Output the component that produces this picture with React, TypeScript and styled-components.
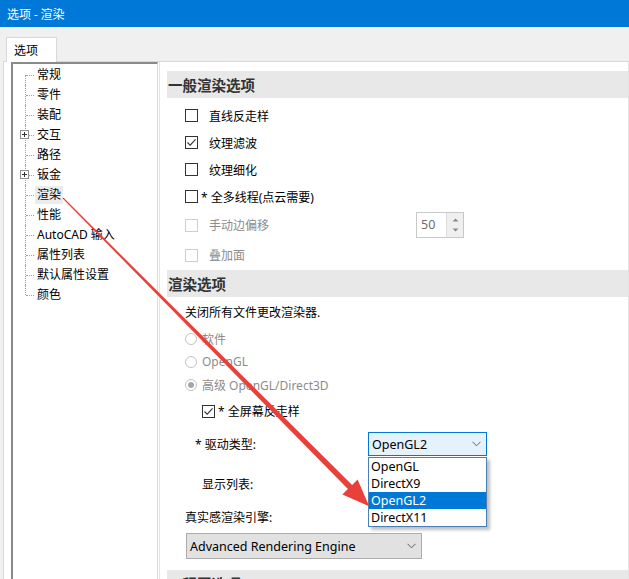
import React from "react";
import styled, { createGlobalStyle } from "styled-components";

const GlobalStyle = createGlobalStyle`
  html, body {
    margin: 0;
    padding: 0;
    background: #f0f0f0;
    overflow: hidden;
  }
  body {
    font-family: "Noto Sans", "Noto Sans CJK SC", sans-serif;
    font-size: 12px;
    color: #000;
  }
`;

const treeItems = [
  { label: "常规" },
  { label: "零件" },
  { label: "装配" },
  { label: "交互", expandable: true },
  { label: "路径" },
  { label: "钣金", expandable: true },
  { label: "渲染", selected: true },
  { label: "性能" },
  { label: "AutoCAD 输入" },
  { label: "属性列表" },
  { label: "默认属性设置" },
  { label: "颜色" },
];

const driverOptions = ["OpenGL", "DirectX9", "OpenGL2", "DirectX11"];

const Chevron = () => (
  <svg width="9" height="6" viewBox="0 0 9 6">
    <path d="M0.5 0.8 L4.5 4.8 L8.5 0.8" fill="none" stroke="#606060" strokeWidth="1" />
  </svg>
);

const Check = () => (
  <svg width="11" height="11" viewBox="0 0 11 11">
    <path d="M1.5 5.5 L4.2 8.2 L9.6 2.4" fill="none" stroke="#333" strokeWidth="1.1" />
  </svg>
);

const App = () => {
  return (
    <Window>
      <GlobalStyle />
      <TitleBar>选项 - 渲染</TitleBar>
      <TabStrip>
        <Tab>选项</Tab>
      </TabStrip>
      <TabPage>
        <Tree>
          {treeItems.map((item, i) => (
            <TreeRow key={item.label}>
              <Guide $first={i === 0} $last={i === treeItems.length - 1} />
              <Branch />
              {item.expandable && (
                <PlusBox>
                  <svg width="7" height="7" viewBox="0 0 7 7">
                    <path d="M1 3.5 H6 M3.5 1 V6" stroke="#333" strokeWidth="1" />
                  </svg>
                </PlusBox>
              )}
              <TreeLabel $selected={item.selected}>{item.label}</TreeLabel>
            </TreeRow>
          ))}
        </Tree>

        <Panel>
          <Header>一般渲染选项</Header>
          <Row $mt={4} $h={27} $indent={18}>
            <Box />
            <Label $gap={11}>直线反走样</Label>
          </Row>
          <Row $h={27} $indent={18}>
            <Box>
              <Check />
            </Box>
            <Label $gap={11}>纹理滤波</Label>
          </Row>
          <Row $h={27} $indent={18}>
            <Box />
            <Label $gap={11}>纹理细化</Label>
          </Row>
          <Row $h={27} $indent={18}>
            <Box />
            <Label $gap={3}>* 全多线程(点云需要)</Label>
          </Row>
          <Row $h={30} $indent={18}>
            <Box $disabled />
            <Label $gap={11} $dim $w={207}>
              手动边偏移
            </Label>
            <Spin>
              <SpinValue>50</SpinValue>
              <SpinButtons>
                <svg width="7" height="4" viewBox="0 0 7 4">
                  <path d="M0.5 3.5 L3.5 0.5 L6.5 3.5 Z" fill="#8a8a8a" />
                </svg>
                <svg width="7" height="4" viewBox="0 0 7 4">
                  <path d="M0.5 0.5 L3.5 3.5 L6.5 0.5 Z" fill="#8a8a8a" />
                </svg>
              </SpinButtons>
            </Spin>
          </Row>
          <Row $h={30} $indent={18}>
            <Box $disabled />
            <Label $gap={11} $dim>
              叠加面
            </Label>
          </Row>

          <Header>渲染选项</Header>
          <Row $mt={3} $h={24} $indent={18}>
            <Label>关闭所有文件更改渲染器.</Label>
          </Row>
          <Row $mt={3} $h={23} $indent={18}>
            <Radio />
            <Label $gap={5} $dim>
              软件
            </Label>
          </Row>
          <Row $h={23} $indent={18}>
            <Radio />
            <Label $gap={5} $dim>
              OpenGL
            </Label>
          </Row>
          <Row $h={23} $indent={18}>
            <Radio $checked />
            <Label $gap={5} $dim>
              高级 OpenGL/Direct3D
            </Label>
          </Row>
          <Row $mt={2} $h={26} $indent={35}>
            <Box>
              <Check />
            </Box>
            <Label $gap={3}>* 全屏幕反走样</Label>
          </Row>
          <Row $mt={8} $h={24} $indent={28}>
            <Label $w={173}>* 驱动类型:</Label>
            <ComboWrap>
              <Combo $active $w={119} $h={24}>
                <span>OpenGL2</span>
                <Chevron />
              </Combo>
              <DropList>
                {driverOptions.map((opt) => (
                  <DropItem key={opt} $hi={opt === "OpenGL2"}>
                    {opt}
                  </DropItem>
                ))}
              </DropList>
            </ComboWrap>
          </Row>
          <Row $mt={16} $h={24} $indent={35}>
            <Label>显示列表:</Label>
          </Row>
          <Row $mt={11} $h={20} $indent={18}>
            <Label>真实感渲染引擎:</Label>
          </Row>
          <Row $mt={6} $h={26} $indent={19}>
            <Combo $w={236} $h={26}>
              <span>Advanced Rendering Engine</span>
              <Chevron />
            </Combo>
          </Row>
          <Header $mt={11}>工程图选项</Header>
        </Panel>
      </TabPage>

      <ArrowLayer viewBox="0 0 629 579" width="629" height="579">
        <polygon
          points="63.4,197.6 352.1,484.9 357.6,479.4 369.2,506.2 342.4,494.6 347.9,489.1 62.6,198.4"
          fill="#e8403a"
        />
      </ArrowLayer>
    </Window>
  );
};

const Window = styled.div`
  position: relative;
  width: 629px;
  height: 579px;
  overflow: hidden;
  display: flex;
  flex-direction: column;
  background: #f0f0f0;
`;

const TitleBar = styled.div`
  height: 27px;
  flex: none;
  background: #0078d7;
  color: #fff;
  font-family: "Noto Sans CJK SC", sans-serif;
  font-size: 12px;
  line-height: 27px;
  padding-left: 7px;
`;

const TabStrip = styled.div`
  height: 34px;
  flex: none;
  display: flex;
  align-items: flex-end;
  padding-left: 6px;
`;

const Tab = styled.div`
  position: relative;
  z-index: 1;
  width: 51px;
  height: 25px;
  margin-bottom: -1px;
  box-sizing: border-box;
  background: #fff;
  border: 1px solid #d9d9d9;
  border-bottom: none;
  font-family: "Noto Sans CJK SC", sans-serif;
  font-size: 12px;
  line-height: 23px;
  padding-left: 7px;
`;

const TabPage = styled.div`
  flex: 1;
  min-height: 0;
  display: flex;
  margin-left: 3px;
  background: #fff;
  border-top: 1px solid #d9d9d9;
  border-left: 1px solid #d9d9d9;
`;

const Tree = styled.div`
  flex: none;
  width: 147px;
  box-sizing: border-box;
  margin-left: 7px;
  padding-top: 1px;
  border-left: 2px solid #8a8a8a;
  border-top: 2px solid #8a8a8a;
  border-right: 1px solid #dcdcdc;
  background: #fff;
`;

const TreeRow = styled.div`
  position: relative;
  height: 20px;
  display: flex;
  align-items: center;
  padding-left: 22px;
  font-family: "Noto Sans", "Noto Sans CJK SC", sans-serif;
  font-size: 12px;
`;

const Guide = styled.span<{ $first?: boolean; $last?: boolean }>`
  position: absolute;
  left: 12px;
  top: ${({ $first }) => ($first ? "10px" : "0")};
  bottom: ${({ $last }) => ($last ? "10px" : "0")};
  border-left: 1px dotted #a0a0a0;
`;

const Branch = styled.span`
  position: absolute;
  left: 13px;
  top: 10px;
  width: 8px;
  border-top: 1px dotted #a0a0a0;
`;

const PlusBox = styled.span`
  position: absolute;
  left: 7px;
  top: 5px;
  width: 9px;
  height: 9px;
  box-sizing: border-box;
  border: 1px solid #919191;
  background: #fff;
  display: flex;
  align-items: center;
  justify-content: center;
`;

const TreeLabel = styled.span<{ $selected?: boolean }>`
  padding: 1px 2px;
  line-height: 16px;
  background: ${({ $selected }) => ($selected ? "#ececec" : "transparent")};
`;

const Panel = styled.div`
  flex: 1;
  min-width: 0;
  margin-left: 1px;
  border-left: 1px solid #e3e3e3;
  border-right: 1px solid #e3e3e3;
  padding: 9px 0 0 7px;
  display: flex;
  flex-direction: column;
`;

const Header = styled.div<{ $mt?: number }>`
  flex: none;
  height: 27px;
  margin-top: ${({ $mt }) => $mt ?? 0}px;
  background: #e8e8e8;
  color: #333;
  font-family: "Noto Sans CJK SC", sans-serif;
  font-size: 14.5px;
  font-weight: bold;
  line-height: 27px;
  padding-left: 1px;
`;

const Row = styled.div<{ $h: number; $mt?: number; $indent?: number }>`
  flex: none;
  display: flex;
  align-items: center;
  height: ${({ $h }) => $h}px;
  margin-top: ${({ $mt }) => $mt ?? 0}px;
  padding-left: ${({ $indent }) => $indent ?? 0}px;
`;

const Label = styled.span<{ $gap?: number; $dim?: boolean; $w?: number }>`
  margin-left: ${({ $gap }) => $gap ?? 0}px;
  color: ${({ $dim }) => ($dim ? "#8c8c8c" : "#000")};
  font-size: 12px;
  white-space: nowrap;
  ${({ $w }) => ($w ? `width: ${$w}px; flex: none;` : "")}
`;

const Box = styled.span<{ $disabled?: boolean }>`
  flex: none;
  width: 13px;
  height: 13px;
  box-sizing: border-box;
  border: 1px solid ${({ $disabled }) => ($disabled ? "#cfcfcf" : "#333")};
  background: #fff;
  display: flex;
  align-items: center;
  justify-content: center;
`;

const Radio = styled.span<{ $checked?: boolean }>`
  flex: none;
  width: 12px;
  height: 12px;
  box-sizing: border-box;
  border-radius: 50%;
  border: 1px solid #c2c2c2;
  background: #fff;
  display: flex;
  align-items: center;
  justify-content: center;

  &::after {
    content: "";
    width: 6px;
    height: 6px;
    border-radius: 50%;
    background: ${({ $checked }) => ($checked ? "#a6a6a6" : "transparent")};
  }
`;

const Spin = styled.div`
  flex: none;
  width: 48px;
  height: 26px;
  box-sizing: border-box;
  border: 1px solid #c8c8c8;
  display: flex;
  background: #fff;
`;

const SpinValue = styled.span`
  flex: 1;
  padding-left: 4px;
  line-height: 24px;
  color: #6d6d6d;
  font-size: 12.5px;
`;

const SpinButtons = styled.div`
  width: 16px;
  background: #efefef;
  border-left: 1px solid #dcdcdc;
  display: flex;
  flex-direction: column;
  align-items: center;
  justify-content: space-evenly;
`;

const ComboWrap = styled.div`
  position: relative;
`;

const Combo = styled.div<{ $w: number; $h: number; $active?: boolean }>`
  width: ${({ $w }) => $w}px;
  height: ${({ $h }) => $h}px;
  box-sizing: border-box;
  display: flex;
  align-items: center;
  justify-content: space-between;
  padding: 0 5px 0 3px;
  background: ${({ $active }) => ($active ? "#e5f1fb" : "#e1e1e1")};
  border: 1px solid ${({ $active }) => ($active ? "#0078d7" : "#adadad")};
  font-size: 12.5px;
  color: #000;
`;

const DropList = styled.div`
  position: absolute;
  top: 25px;
  left: 0;
  width: 119px;
  box-sizing: border-box;
  background: #fff;
  border: 1px solid #4a7fb5;
  box-shadow: 3px 3px 3px rgba(0, 0, 0, 0.25);
  z-index: 2;
`;

const DropItem = styled.div<{ $hi?: boolean }>`
  height: 17px;
  line-height: 17px;
  padding-left: 2px;
  font-size: 12.5px;
  background: ${({ $hi }) => ($hi ? "#0078d7" : "#fff")};
  color: ${({ $hi }) => ($hi ? "#fff" : "#000")};
`;

const ArrowLayer = styled.svg`
  position: absolute;
  left: 0;
  top: 0;
  pointer-events: none;
  z-index: 5;
`;

export default App;
